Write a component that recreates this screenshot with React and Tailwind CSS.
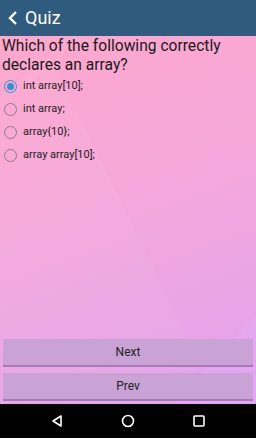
import { useState } from 'react';

const options = ['int array[10];', 'int array;', 'array{10};', 'array array[10];'];

export default function App() {
  const [selected, setSelected] = useState(0);

  return (
    <div
      className="w-[256px] h-[438px] flex flex-col overflow-hidden"
      style={{ fontFamily: 'Roboto, "Liberation Sans", sans-serif' }}
    >
      {/* Toolbar */}
      <div className="h-[36px] bg-[#2f5b7f] flex items-center pl-[7px] gap-[6px] shrink-0">
        <svg className="w-[12px] h-[16px]" viewBox="0 0 12 16" fill="none" stroke="white" strokeWidth={2.4}>
          <path d="M9 2L3 8l6 6" />
        </svg>
        <span className="text-white text-[18px] leading-none">Quiz</span>
      </div>

      {/* Content */}
      <div className="relative flex-1 flex flex-col bg-[linear-gradient(160deg,#fea8cc_0%,#f5a8dc_45%,#e0a2ee_100%)]">
        <svg className="absolute inset-0 w-full h-full" viewBox="0 0 256 368" preserveAspectRatio="none">
          <polygon points="0,60 50,20 200,330 170,368 0,368" fill="white" opacity="0.04" />
          <polygon points="170,368 256,280 256,368" fill="#e9b0ff" opacity="0.3" />
        </svg>

        <div className="relative flex-1 flex flex-col">
          <h1 className="text-[15.6px] leading-[19px] text-[#1a1a1a] px-[2px] pt-[1px]">
            Which of the following correctly declares an array?
          </h1>

          <div className="flex flex-col pl-[4px]">
            {options.map((opt, i) => (
              <button
                key={opt}
                onClick={() => setSelected(i)}
                className="flex items-center gap-[6px] h-[23px] text-left"
              >
                <span
                  className={
                    'w-[13px] h-[13px] rounded-full border-[1.5px] flex items-center justify-center ' +
                    (selected === i ? 'border-[#2a93d5]' : 'border-[#8a7a8e]')
                  }
                >
                  {selected === i && <span className="w-[7px] h-[7px] rounded-full bg-[#2a93d5]" />}
                </span>
                <span className="text-[11px] text-[#222]">{opt}</span>
              </button>
            ))}
          </div>

          <div className="flex-1" />

          <div className="flex flex-col gap-[6px] px-[3px] pb-[3px]">
            <button className="h-[28px] bg-[#c9a2d6] border-b-2 border-[#a87ab8] text-[12px] text-[#222]">
              Next
            </button>
            <button className="h-[28px] bg-[#c9a2d6] border-b-2 border-[#a87ab8] text-[12px] text-[#222]">
              Prev
            </button>
          </div>
        </div>
      </div>

      {/* Nav bar */}
      <div className="h-[34px] bg-black flex items-center justify-center gap-[57px] shrink-0">
        <svg className="w-[14px] h-[14px]" viewBox="0 0 14 14" fill="none" stroke="white" strokeWidth={1.6}>
          <path d="M11 2L3 7l8 5z" strokeLinejoin="round" />
        </svg>
        <svg className="w-[14px] h-[14px]" viewBox="0 0 14 14" fill="none" stroke="white" strokeWidth={1.6}>
          <circle cx="7" cy="7" r="5.5" />
        </svg>
        <svg className="w-[14px] h-[14px]" viewBox="0 0 14 14" fill="none" stroke="white" strokeWidth={1.6}>
          <rect x="2" y="2" width="10" height="10" rx="1" />
        </svg>
      </div>
    </div>
  );
}
